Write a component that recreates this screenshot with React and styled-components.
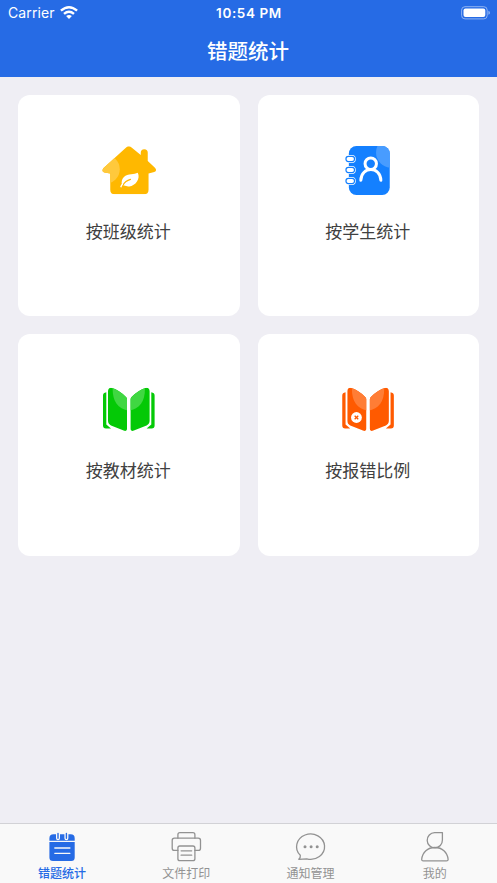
import React from 'react'
import styled, { createGlobalStyle } from 'styled-components'

const GlobalStyle = createGlobalStyle`
  * {
    box-sizing: border-box;
  }

  body {
    background-color: #efeef4;
    font-family: Inter, 'Noto Sans CJK SC', sans-serif;
    margin: 0;
  }
`

const Screen = styled.div`
  display: flex;
  flex-direction: column;
  height: 883px;
  overflow: hidden;
  width: 497px;
`

const Header = styled.header`
  background-color: #266be5;
  color: #fff;
  flex: none;
  height: 77px;
`

const StatusBar = styled.div`
  align-items: center;
  display: grid;
  grid-template-columns: 1fr auto 1fr;
  height: 26px;
  padding: 0 6px 0 8px;
`

const Carrier = styled.div`
  align-items: center;
  display: flex;
  font-size: 14px;
  gap: 5px;
  letter-spacing: 0.1px;
  line-height: 26px;
`

const Time = styled.div`
  font-size: 13.5px;
  font-weight: 600;
  letter-spacing: 0.6px;
  line-height: 26px;
  margin-right: 1px;
`

const BatteryIcon = styled.svg`
  display: block;
  justify-self: end;
  margin-bottom: 1px;
`

const Title = styled.h1`
  font-size: 20.5px;
  font-weight: 500;
  line-height: 52px;
  margin: 0;
  padding-right: 1px;
  text-align: center;
`

const Grid = styled.main`
  align-content: start;
  display: grid;
  flex: 1;
  gap: 18px;
  grid-auto-rows: 221.3px;
  grid-template-columns: 1fr 1fr;
  padding: 18px;
`

const Card = styled.section`
  align-items: center;
  background-color: #fff;
  border-radius: 12px;
  display: flex;
  flex-direction: column;
  padding-top: 43px;
`

const CardIcon = styled.svg`
  display: block;
  height: 64px;
  width: 70px;
`

const CardLabel = styled.span`
  color: #404040;
  font-size: 17px;
  line-height: 26px;
  margin-top: 17px;
  padding-right: 1px;
`

const TabBar = styled.nav`
  background-color: #f9f9f9;
  border-top: 1px solid #d2d2d6;
  display: grid;
  flex: none;
  grid-template-columns: repeat(4, 1fr);
  height: 60px;
`

const Tab = styled.div`
  align-items: center;
  color: ${props => (props.$active ? '#266be5' : '#929292')};
  display: flex;
  flex-direction: column;
  font-size: 12px;
  font-weight: ${props => (props.$active ? 500 : 400)};
  gap: 1px;
  line-height: 18px;
  padding-top: 6px;
`

const TabIcon = styled.svg`
  display: block;
  height: 34px;
  width: 34px;
`

const HouseIcon = () => (
  <CardIcon viewBox="-0.75 -0.2 70 64">
    <clipPath id="house">
      <path d="M31.4 9.3Q34 7 36.8 9.3L46 16.7V14.5Q46 11 49.5 11T53 14.5V22.8L60.2 29.5Q62.8 32.5 59.5 33.9L53.8 35.3V51.5Q53.8 56 49.3 56H20Q15.5 56 15.5 51.5V35.3L9.6 34.2Q6.3 33 8.8 29.8Z" />
    </clipPath>
    <g clipPath="url(#house)">
      <rect width="70" height="64" fill="#ffb800" />
      <circle cx="10.5" cy="31" r="14.5" fill="#ffc93c" />
    </g>
    <path d="M27.2 46.8C25.7 39.5 31 36.2 36.5 36Q40.3 35.9 43 34.5C46 40.3 40.8 47.6 34.5 48.2Q31.5 48.4 29.4 47.4Z" fill="#fff" />
    <path d="M28.3 46.8Q30.5 42.8 35.7 41.2" fill="none" stroke="#ffb800" strokeWidth="1.2" strokeLinecap="round" />
    <path d="M26.2 48.5Q26.6 47.3 27.5 46.2" fill="none" stroke="#fff" strokeWidth="1.4" strokeLinecap="round" />
  </CardIcon>
)

const ContactsIcon = () => (
  <CardIcon viewBox="-1.25 0 70 64">
    <clipPath id="contacts">
      <rect x="14.6" y="8" width="40.9" height="49" rx="7.5" />
    </clipPath>
    <g clipPath="url(#contacts)">
      <rect width="70" height="64" fill="#1480ff" />
      <circle cx="57" cy="14.5" r="15.2" fill="#489cff" />
    </g>
    {[21, 32, 43].map(y => (
      <g key={y}>
        <rect x="10.3" y={y - 4} width="11.2" height="8" rx="3.8" fill="#fff" />
        <rect x="11.7" y={y - 2.6} width="8.6" height="5.2" rx="2.5" fill="#fff" stroke="#1480ff" strokeWidth="1.2" />
      </g>
    ))}
    <g fill="none" stroke="#fff" strokeWidth="3" strokeLinecap="round">
      <circle cx="36.5" cy="25.7" r="5.7" />
      <path d="M26.6 42.3C27 28 46.2 28 46.6 42.3" />
    </g>
  </CardIcon>
)

const LEFT_PAGE = 'M13 11.5Q13 7.3 17.2 8.2Q23.8 10 31 17.2Q32 18.2 32 19.5V48.6Q32 52 28.7 50.8L16 45.6Q13 44.2 13 41Z'

const BookIcon = ({ id, offset, color, highlight, error }) => (
  <CardIcon viewBox={`${offset} -2.8 70 64`}>
    <clipPath id={id}>
      <path d={LEFT_PAGE} />
      <path d={LEFT_PAGE} transform="matrix(-1 0 0 1 67.6 0)" />
    </clipPath>
    <path
      d="M11.3 12.5V44.8L16 48.8H11Q8 48.8 8 45.8V15.8Q8 13 11.3 12.5ZM56.3 12.5V44.8L51.6 48.8H56.6Q59.6 48.8 59.6 45.8V15.8Q59.6 13 56.3 12.5Z"
      fill={color}
    />
    <g clipPath={`url(#${id})`}>
      <rect width="70" height="60" fill={color} />
      <path d="M17.7 6C17 21 22 28.5 33.8 31C45.6 28.5 50.6 21 49.9 6Z" fill={highlight} />
    </g>
    {error && (
      <>
        <circle cx="22.2" cy="37.7" r="5.4" fill="#fff" />
        <path d="M20.4 35.9L24 39.5M24 35.9L20.4 39.5" stroke={color} strokeWidth="1.3" />
      </>
    )}
  </CardIcon>
)

const cards = [
  { label: '按班级统计', icon: <HouseIcon /> },
  { label: '按学生统计', icon: <ContactsIcon /> },
  { label: '按教材统计', icon: <BookIcon id="textbook" offset={-1} color="#04c906" highlight="#40d742" /> },
  { label: '按报错比例', icon: <BookIcon id="errors" offset={-1.25} color="#ff5a00" highlight="#ff7d35" error /> },
]

const tabs = [
  {
    label: '错题统计',
    active: true,
    icon: (
      <TabIcon viewBox="0 0 34 34">
        <path d="M4.4 10.8V8.5Q4.4 4.3 8.5 4.3H25.7Q29.7 4.3 29.7 8.5V10.8ZM4.4 12H29.7V27.5Q29.7 31 26.2 31H8Q4.4 31 4.4 27.5Z" fill="currentColor" />
        <g fill="none" strokeLinecap="round">
          <path d="M13 3.4V8.2M21.4 3.4V8.2" stroke="#f9f9f9" strokeWidth="4" />
          <path d="M13 3.4V8.2M21.4 3.4V8.2" stroke="currentColor" strokeWidth="1.4" />
          <path d="M9.8 18H24.9M9.8 23.3H24.9" stroke="#f9f9f9" strokeWidth="1.3" />
        </g>
      </TabIcon>
    ),
  },
  {
    label: '文件打印',
    icon: (
      <TabIcon viewBox="-0.4 -0.2 34 34" fill="none" stroke="currentColor" strokeWidth="1.3" strokeLinecap="round">
        <path d="M8.5 8V4.5Q8.5 2.5 10.5 2.5H23.5Q25.5 2.5 25.5 4.5V8" />
        <path d="M8.5 20.2H5Q2.8 20.2 2.8 18V10.2Q2.8 8 5 8H28.9Q31.1 8 31.1 10.2V18Q31.1 20.2 28.9 20.2H25.4" />
        <rect x="8.5" y="15.8" width="17" height="14.7" rx="2" />
        <path d="M11.7 20.6H22.3M11.7 25H22.3" />
      </TabIcon>
    ),
  },
  {
    label: '通知管理',
    icon: (
      <TabIcon viewBox="0 0 34 34">
        <path
          d="M4.8 29.3Q6.7 27.5 6.3 25.3A14 12.7 0 1 1 12.8 28.9Q9 29.3 4.8 29.3Z"
          fill="none"
          stroke="currentColor"
          strokeWidth="1.3"
          strokeLinejoin="round"
        />
        {[11, 17.1, 23.2].map(x => (
          <circle key={x} cx={x} cy="16.7" r="1.5" fill="currentColor" />
        ))}
      </TabIcon>
    ),
  },
  {
    label: '我的',
    icon: (
      <TabIcon viewBox="0.4 -0.2 34 34" fill="none" stroke="currentColor" strokeWidth="1.3" strokeLinejoin="round">
        <path d="M17 2.4H24.8V9.8A7.6 7.6 0 1 1 17 2.4Z" />
        <path d="M5.7 30.6Q4 30.6 4.1 29C4.9 22 10 17.3 17.3 17.3S29.7 22 30.5 29Q30.6 30.6 28.9 30.6Z" />
      </TabIcon>
    ),
  },
]

const App = () => (
  <>
    <GlobalStyle />
    <Screen>
      <Header>
        <StatusBar>
          <Carrier>
            Carrier
            <svg width="18" height="14" viewBox="0 0 18 14" fill="none" stroke="#fff" strokeWidth="2.4">
              <path d="M0.9 4.7Q9 -2.2 17.1 4.7M4 7.9Q9 3.7 14 7.9" />
              <path d="M6.1 10.1Q9 7.8 11.9 10.1L9 13Z" fill="#fff" stroke="none" />
            </svg>
          </Carrier>
          <Time>10:54 PM</Time>
          <BatteryIcon width="30" height="14" viewBox="0 0 30 14">
            <rect x="0.6" y="0.7" width="25.6" height="12.2" rx="3.4" fill="none" stroke="#8fb3f2" />
            <rect x="2.5" y="2.6" width="21.8" height="8.4" rx="2" fill="#fff" />
            <path d="M27.4 4.8Q29 5.3 29 6.8T27.4 8.8Z" fill="#8fb3f2" />
          </BatteryIcon>
        </StatusBar>
        <Title>错题统计</Title>
      </Header>
      <Grid>
        {cards.map(card => (
          <Card key={card.label}>
            {card.icon}
            <CardLabel>{card.label}</CardLabel>
          </Card>
        ))}
      </Grid>
      <TabBar>
        {tabs.map(tab => (
          <Tab key={tab.label} $active={tab.active}>
            {tab.icon}
            {tab.label}
          </Tab>
        ))}
      </TabBar>
    </Screen>
  </>
)

export default App
